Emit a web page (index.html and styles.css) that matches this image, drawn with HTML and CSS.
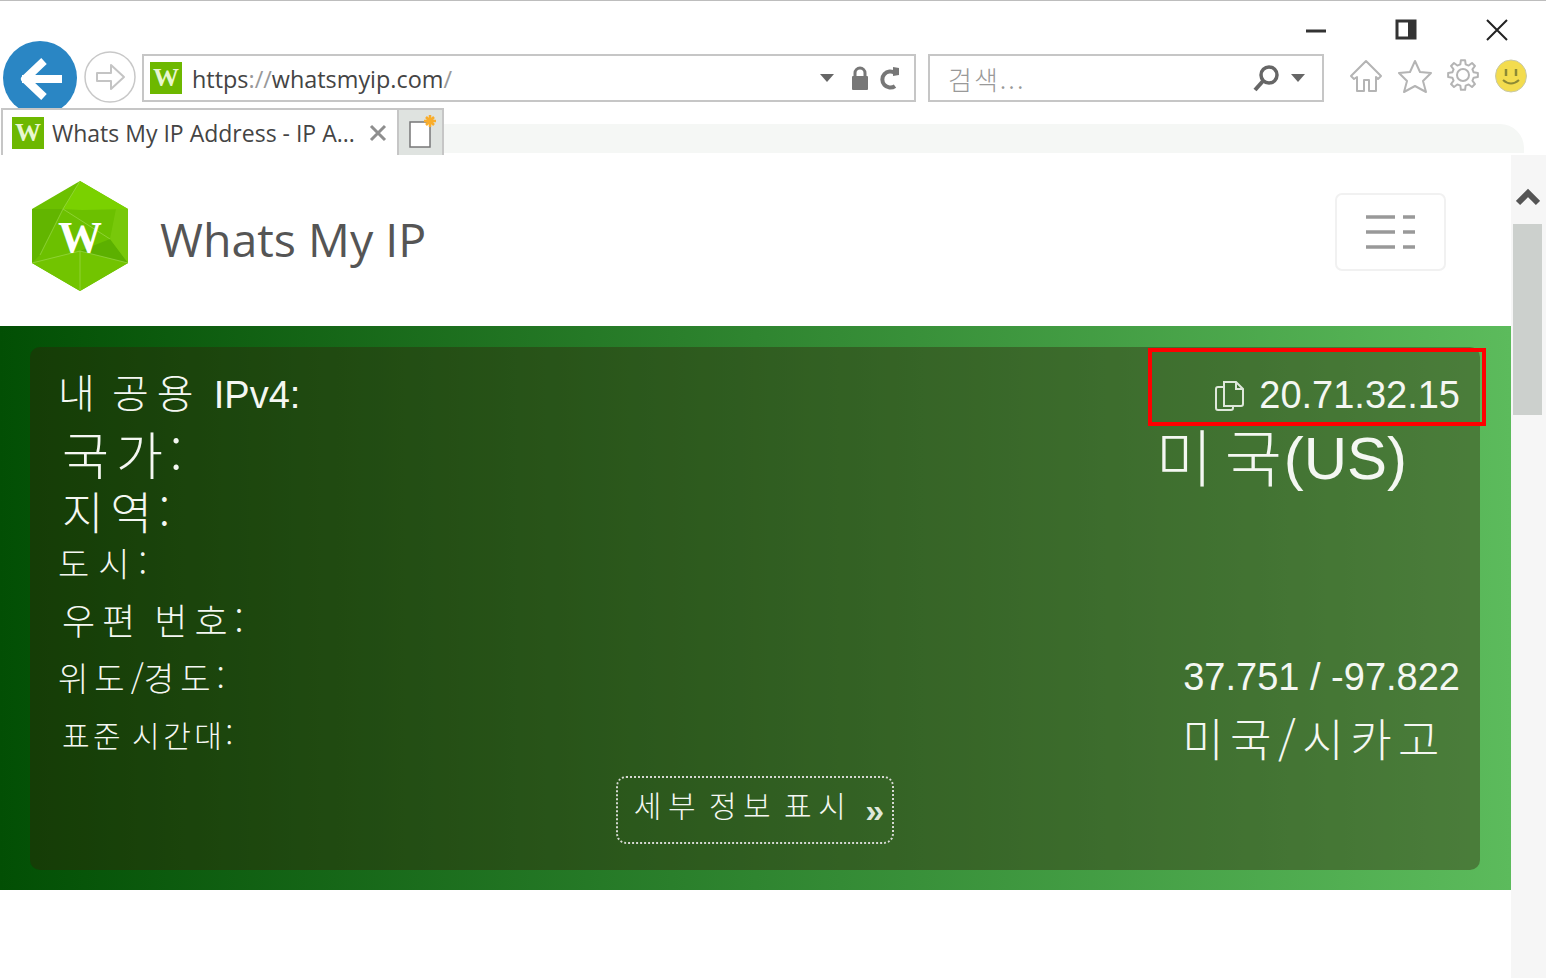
FILE: index.html
```html
<!DOCTYPE html>
<html lang="ko">
<head>
    <meta charset="UTF-8">
    <title>Whats My IP Address</title>
    <link rel="stylesheet" href="styles.css">
</head>
<body>
<div class="window">
    <div class="title-bar">
        <svg class="win-btn" width="22" height="24" viewBox="0 0 22 24"><path d="M1 13h20" stroke="#333" stroke-width="3"/></svg>
        <svg class="win-btn" width="22" height="24" viewBox="0 0 22 24"><rect x="2" y="3" width="18" height="17" fill="none" stroke="#333" stroke-width="3"/><rect x="13" y="2" width="8" height="19" fill="#333"/></svg>
        <svg class="win-btn" width="24" height="24" viewBox="0 0 24 24"><path d="M2 2l20 20M22 2L2 22" stroke="#222" stroke-width="2"/></svg>
    </div>
    <div class="nav-bar">
        <svg class="back-btn" width="74" height="74" viewBox="0 0 74 74"><circle cx="37" cy="37" r="37" fill="#2a86c4"/><path d="M19 38h40M41 20L22 38l19 18" fill="none" stroke="#fff" stroke-width="8" stroke-linejoin="round"/></svg>
        <svg class="forward-btn" width="52" height="52" viewBox="0 0 52 52"><circle cx="26" cy="26" r="25" fill="#fff" stroke="#c8c8c8" stroke-width="1.5"/><path d="M13 22h14v-8l13 12-13 12v-8H13z" fill="none" stroke="#c4c4c4" stroke-width="2" stroke-linejoin="round"/></svg>
        <div class="address-box">
            <span class="favicon">W</span>
            <span class="url">https<i>://</i>whatsmyip.com<i>/</i></span>
            <svg class="caret" width="14" height="8" viewBox="0 0 14 8"><path d="M0 0h14L7 8z" fill="#666"/></svg>
            <svg class="lock" width="20" height="24" viewBox="0 0 20 24"><path d="M5 11V7a5 5 0 0110 0v4" fill="none" stroke="#777" stroke-width="3"/><rect x="2" y="10" width="16" height="14" rx="1" fill="#777"/></svg>
            <svg width="20" height="24" viewBox="0 0 20 24"><path d="M15 7a8 8 0 100 13" fill="none" stroke="#777" stroke-width="4"/><path d="M13 1v9l6-1V2z" fill="#777"/></svg>
        </div>
        <div class="search-box">
            <span class="search-hint">검색...</span>
            <svg width="28" height="28" viewBox="0 0 28 28"><circle cx="16" cy="11" r="8" fill="none" stroke="#666" stroke-width="3.5"/><path d="M10 17l-8 9" stroke="#666" stroke-width="4"/></svg>
            <svg class="caret" width="14" height="8" viewBox="0 0 14 8"><path d="M0 0h14L7 8z" fill="#666"/></svg>
        </div>
        <div class="tools">
            <svg width="34" height="34" viewBox="0 0 34 34"><path d="M17 2L2 17l3 3 3-2v14h7V21h5v11h7V18l2 2 3-3z" fill="none" stroke="#b4b4b4" stroke-width="2" stroke-linejoin="round"/></svg>
            <svg width="36" height="34" viewBox="0 0 36 34"><path d="M18 2l5 11 11 1-8 8 3 11-11-6-11 6 3-11-8-8 11-1z" fill="none" stroke="#b4b4b4" stroke-width="2" stroke-linejoin="round"/></svg>
            <svg class="gear" width="32" height="32" viewBox="0 0 32 32"><polygon points="26.67,13.34 30.85,13.91 30.85,18.09 26.67,18.66 25.43,21.67 27.98,25.03 25.03,27.98 21.67,25.43 18.66,26.67 18.09,30.85 13.91,30.85 13.34,26.67 10.33,25.43 6.97,27.98 4.02,25.03 6.57,21.67 5.33,18.66 1.15,18.09 1.15,13.91 5.33,13.34 6.57,10.33 4.02,6.97 6.97,4.02 10.33,6.57 13.34,5.33 13.91,1.15 18.09,1.15 18.66,5.33 21.67,6.57 25.03,4.02 27.98,6.97 25.43,10.33" fill="none" stroke="#b4b4b4" stroke-width="2" stroke-linejoin="round"/><circle cx="16" cy="16" r="6" fill="none" stroke="#b4b4b4" stroke-width="2"/></svg>
            <svg width="32" height="34" viewBox="0 0 32 34"><ellipse cx="16" cy="17" rx="15.5" ry="16" fill="#f3dc4e" stroke="#c9c9a8"/><path d="M11 10v7M21 10v7" stroke="#8d8a35" stroke-width="2.5"/><path d="M8 21q8 7 16 0" fill="none" stroke="#8d8a35" stroke-width="2"/></svg>
        </div>
    </div>
    <div class="tab-bar">
        <div class="tab">
            <span class="favicon">W</span>
            <span class="tab-title">Whats My IP Address - IP A...</span>
            <svg width="18" height="18" viewBox="0 0 18 18"><path d="M2 2l14 14M16 2L2 16" stroke="#8e8e8e" stroke-width="3"/></svg>
        </div>
        <div class="new-tab">
            <svg width="30" height="36" viewBox="0 0 30 36"><rect x="3" y="10" width="20" height="25" fill="#fff" stroke="#777" stroke-width="1.5"/><path d="M23 3v12M17 9h12M19 5l8 8M27 5l-8 8" stroke="#f9ad2b" stroke-width="2.5"/></svg>
        </div>
        <div class="tab-strip"></div>
    </div>

    <div class="viewport">
        <div class="page">
            <header class="site-head">
                <svg class="logo" width="98" height="110" viewBox="0 0 98 110">
                    <path d="M49 0l48 28v54l-48 28L1 82V28z" fill="#6cc000"/>
                    <path d="M49 0l48 28-46 1-19-1z" fill="#7ad100"/>
                    <path d="M1 28l31 0-23 46-8 8z" fill="#62b500"/>
                    <path d="M1 82l48-12 48 12-48 28z" fill="#72c400"/>
                    <path d="M49 70l48 12-18-24-30 12z" fill="#5cb000"/>
                    <path d="M85 28l12 0v54l-18-24z" fill="#78c80a"/>
                    <path d="M49 0L32 28l-23 46M49 70v40M1 82l48-12 48 12M32 28l47 30" fill="none" stroke="#a4dd55" stroke-width=".6"/>
                    <text x="49" y="71" text-anchor="middle" class="logo-w">W</text>
                </svg>
                <span class="site-name">Whats My IP</span>
                <button class="nav-toggle">
                    <svg width="50" height="34" viewBox="0 0 50 34"><path d="M0 2h29M37 2h12M0 17h29M37 17h12M0 32h29M37 32h12" stroke="#999" stroke-width="3.5"/></svg>
                </button>
            </header>

            <section class="hero">
                <div class="panel">
                    <div class="highlight"></div>
                    <div class="row row-ip">
                        <span class="label">내 공용 <b>IPv4:</b></span>
                        <span class="value">
                            <svg width="30" height="32" viewBox="0 0 30 32"><path d="M9 3h12l7 7v15a2 2 0 01-2 2H9z" fill="none" stroke="#dfe8db" stroke-width="2"/><path d="M21 3v7h7" fill="none" stroke="#dfe8db" stroke-width="2"/><path d="M9 8H3a2 2 0 00-2 2v19a2 2 0 002 2h13a2 2 0 002-2v-2" fill="none" stroke="#dfe8db" stroke-width="2"/></svg>
                            20.71.32.15
                        </span>
                    </div>
                    <div class="row row-country">
                        <span class="label">국가:</span>
                        <span class="value">미국<b>(US)</b></span>
                    </div>
                    <div class="row row-region"><span class="label">지역:</span></div>
                    <div class="row row-city"><span class="label">도시:</span></div>
                    <div class="row row-zip"><span class="label">우편 번호:</span></div>
                    <div class="row row-geo">
                        <span class="label">위도<span class="slash">/</span>경도:</span>
                        <span class="value">37.751 / -97.822</span>
                    </div>
                    <div class="row row-zone">
                        <span class="label">표준 시간대:</span>
                        <span class="value">미국/시카고</span>
                    </div>
                    <a class="more-btn" href="javascript:;"><span>세부 정보 표시</span><b>»</b></a>
                </div>
            </section>
        </div>
        <aside class="scrollbar">
            <svg width="24" height="18" viewBox="0 0 24 18"><path d="M2 15L12 5l10 10" fill="none" stroke="#555" stroke-width="6"/></svg>
            <div class="thumb"></div>
        </aside>
    </div>
</div>
</body>
</html>
```

FILE: styles.css
```css
html,body{margin:0;padding:0;background:#fff;}
body{width:1546px;height:978px;overflow:hidden;font-family:"Open Sans","Noto Sans CJK KR",sans-serif;}
svg{display:block;flex:none;}

.window{height:978px;display:flex;flex-direction:column;border-top:1px solid #bdbdbd;box-sizing:border-box;}

/* browser chrome */
.title-bar{height:40px;display:flex;justify-content:flex-end;align-items:flex-end;gap:68px;padding-right:37px;box-sizing:border-box;}
.win-btn{margin-bottom:-1px;}
.nav-bar{height:67px;display:flex;align-items:flex-start;padding-left:3px;}
.back-btn{position:relative;z-index:2;margin-right:7px;}
.forward-btn{margin:10px 6px 0 0;}
.address-box,.search-box{height:48px;margin-top:13px;box-sizing:border-box;border:2px solid #c6c6c6;display:flex;align-items:center;}
.address-box{width:774px;padding:0 14px 0 6px;gap:10px;}
.url{flex:1;font-size:23.4px;color:#444;white-space:nowrap;padding-top:2px;}
.url i{font-style:normal;color:#999;}
.caret{margin-right:6px;}
.search-box{width:396px;margin-left:12px;padding:0 11px 0 18px;gap:10px;}
.search-hint{flex:1;font:300 26px "Noto Sans CJK KR",sans-serif;letter-spacing:2px;color:#999;}
.tools{display:flex;gap:14px;margin:18px 0 0 25px;}
.gear{margin-right:2px;}
.favicon{width:32px;height:32px;flex:none;background:#6db800;color:#e8f6d0;font:bold 26px/32px "Liberation Serif",serif;text-align:center;}

.tab-bar{height:47px;display:flex;align-items:stretch;}
.tab{width:398px;margin-left:1px;box-sizing:border-box;border:2px solid #c6c6c6;border-bottom:0;background:#fff;display:flex;align-items:center;gap:8px;padding:0 10px 0 9px;position:relative;z-index:3;}
.tab-title{flex:1;font-size:23px;color:#444;white-space:nowrap;overflow:hidden;}
.new-tab{width:45px;box-sizing:border-box;border:2px solid #c6c6c6;border-left:0;border-bottom:0;background:#dfe3e0;padding:2px 0 0 8px;overflow:hidden;}
.tab-strip{width:1080px;margin-top:16px;margin-bottom:2px;background:#f5f7f5;border-top-right-radius:24px;}

/* page */
.viewport{flex:1;display:flex;min-height:0;}
.page{width:1511px;flex:none;}
.site-head{height:171px;display:flex;align-items:center;padding:0 65px 10px 31px;box-sizing:border-box;}
.logo-w{font:bold 44px "Liberation Serif",serif;fill:#fff;}
.site-name{flex:1;margin:6px 0 0 31px;font-size:46.5px;color:#555;}
.nav-toggle{width:111px;height:78px;margin-top:-8px;padding:0;border:2px solid #f1f1f1;border-radius:7px;background:#fff;display:flex;align-items:center;justify-content:center;}

.hero{height:564px;padding:21px 31px 20px 30px;box-sizing:border-box;background:linear-gradient(90deg,#024f04,#5cbb5c);}
.panel{height:523px;padding-top:17px;box-sizing:border-box;position:relative;background:rgba(50,29,8,.38);border-radius:10px;}
.highlight{position:absolute;left:1118px;top:1px;width:330px;height:70px;border:4px solid #f00;}

.row{display:flex;justify-content:space-between;align-items:center;padding:0 20px 0 28px;color:#f4f7f2;font-family:"Noto Sans CJK KR",sans-serif;font-weight:300;line-height:1;white-space:nowrap;}
.row b{font:400 1em/1 "Liberation Sans",sans-serif;letter-spacing:0;word-spacing:0;}
.value{display:flex;align-items:center;gap:14px;}
.row-ip{height:62px;font-size:40px;letter-spacing:8px;word-spacing:-10px;}
.row-ip .label{margin-bottom:6px;}
.row-ip .label b{font-size:38px;margin-left:3px;}
.row-ip .value{font:38px/1 "Liberation Sans",sans-serif;letter-spacing:0;word-spacing:0;}
.row-country{height:58px;font-size:51px;letter-spacing:7px;}
.row-country .label{padding-left:4px;margin-bottom:4px;}
.row-country .value{font-size:62px;letter-spacing:12px;gap:0;padding-right:53px;}
.row-country .value b{font-size:60px;margin:8px 0 0 -10px;}
.row-region{height:52px;font-size:45px;letter-spacing:7px;}
.row-region .label{padding-left:4px;}
.row-city{height:54px;font-size:34px;letter-spacing:9px;}
.row-zip{height:58px;font-size:36px;letter-spacing:7px;word-spacing:-5px;}
.row-zip .label{padding-left:4px;}
.row-geo{height:58px;font-size:33px;letter-spacing:6px;}
.row-geo .slash{letter-spacing:0;}
.row-geo .value{font:38px/1 "Liberation Sans",sans-serif;letter-spacing:0;}
.row-zone{height:56px;font-size:30px;letter-spacing:3.5px;word-spacing:-4px;}
.row-zone .label{padding-left:4px;}
.row-zone .value{font-size:45px;letter-spacing:6.5px;padding-right:14px;margin-top:6px;}

.more-btn{display:flex;align-items:center;justify-content:center;gap:13px;width:278px;height:68px;margin:14px auto 0;padding-left:8px;box-sizing:border-box;border:2px dotted #d5d8d2;border-radius:10px;color:#f4f7f2;text-decoration:none;font:300 30px/1 "Noto Sans CJK KR",sans-serif;letter-spacing:6.5px;word-spacing:-8px;white-space:nowrap;}
.more-btn span{margin-bottom:12px;}
.more-btn b{font:bold 34px/1 "Liberation Sans",sans-serif;letter-spacing:0;color:#dfe8db;}

.scrollbar{width:35px;flex:none;background:#f6f6f6;display:flex;flex-direction:column;align-items:center;padding:33px 2px 0 0;box-sizing:border-box;}
.thumb{width:29px;height:191px;margin-top:18px;background:#ccd0cd;}
```
